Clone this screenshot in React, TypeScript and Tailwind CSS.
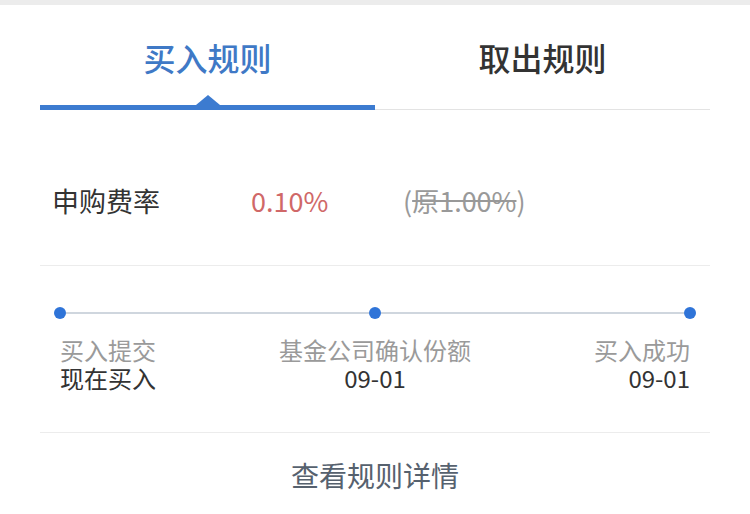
import React from 'react';

const font = { fontFamily: '"Noto Sans CJK SC", "Noto Sans", sans-serif' };

function Tabs() {
  return (
    <div className="flex">
      {/* active tab */}
      <div className="flex w-1/2 flex-col">
        <div className="pt-[32px] pb-[28px] text-center text-[32px] leading-[40px] font-medium text-[#3f79c6]">
          买入规则
        </div>
        <div className="relative h-[5px] bg-[#3c7bd0]">
          <div className="absolute bottom-full left-1/2 h-0 w-0 -translate-x-1/2 border-x-[12px] border-b-[10px] border-x-transparent border-b-[#3c7bd0]" />
        </div>
      </div>
      {/* inactive tab */}
      <div className="flex w-1/2 flex-col">
        <div className="pt-[32px] pb-[28px] text-center text-[32px] leading-[40px] font-medium text-[#333333]">
          取出规则
        </div>
        <div className="flex h-[5px] flex-col justify-end">
          <div className="h-px bg-[#e3e3e3]" />
        </div>
      </div>
    </div>
  );
}

function FeeRow() {
  return (
    <div className="flex items-center pt-[73px] pb-[46px] pl-[12px] text-[27px] leading-[36px]">
      <span className="w-[199px] text-[#333333]">申购费率</span>
      <span className="w-[152px] text-[#d06868]">0.10%</span>
      <span className="text-[#999999]">
        (<span className="line-through">原1.00%</span>)
      </span>
    </div>
  );
}

function Dot() {
  return <div className="h-[12px] w-[12px] shrink-0 rounded-full bg-[#2f74d8]" />;
}

function Timeline() {
  const steps = [
    { title: '买入提交', date: '现在买入', align: 'text-left' },
    { title: '基金公司确认份额', date: '09-01', align: 'text-center' },
    { title: '买入成功', date: '09-01', align: 'text-right' },
  ];
  return (
    <div className="pt-[41px] pb-[40px]">
      <div className="flex items-center px-[14px]">
        <Dot />
        <div className="h-[2px] flex-1 bg-[#cfd6de]" />
        <Dot />
        <div className="h-[2px] flex-1 bg-[#cfd6de]" />
        <Dot />
      </div>
      <div className="mt-[17px] grid grid-cols-3 px-[20px] text-[24px] leading-[28px]">
        {steps.map((s, i) => (
          <div key={i} className={s.align}>
            <div className="whitespace-nowrap text-[#9a9a9a]">{s.title}</div>
            <div className="whitespace-nowrap text-[#333333]">{s.date}</div>
          </div>
        ))}
      </div>
    </div>
  );
}

export default function App() {
  return (
    <div className="h-[514px] w-[750px] overflow-hidden bg-white" style={font}>
      <div className="h-[5px] bg-[#ececec]" />
      <div className="px-[40px]">
        <Tabs />
        <FeeRow />
        <div className="h-px bg-[#ececec]" />
        <Timeline />
        <div className="h-px bg-[#ececec]" />
        <div className="pt-[24px] text-center text-[28px] leading-[36px] text-[#56616e]">
          查看规则详情
        </div>
      </div>
    </div>
  );
}
